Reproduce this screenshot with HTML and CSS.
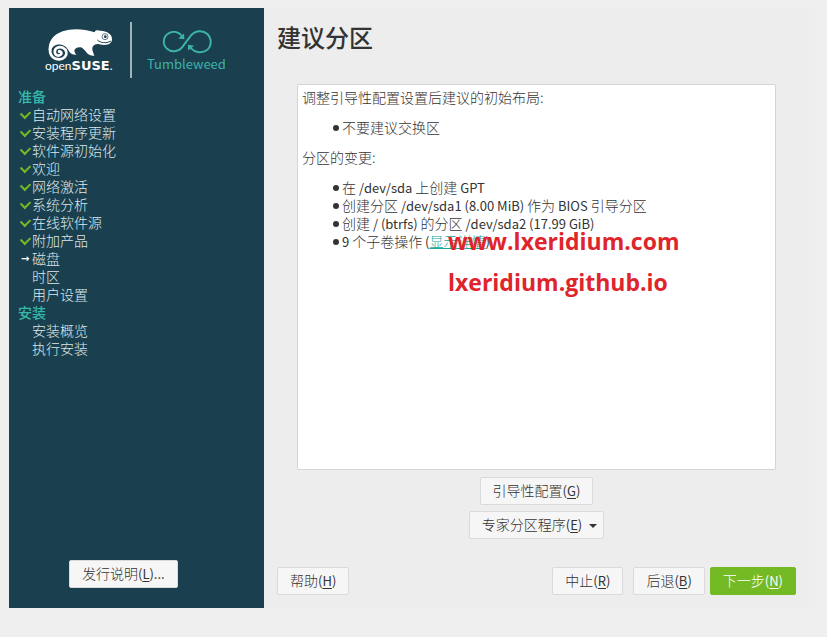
FILE: index.html
```
<!DOCTYPE html>
<html lang="zh-CN">
<head>
    <meta charset="UTF-8">
    <meta name="viewport" content="width=device-width, initial-scale=1.0">
    <title>建议分区</title>
    <link rel="stylesheet" href="styles.css">
</head>
<body>

    <div class="window">
        <aside class="sidebar">
            <div class="logo">
                <div class="brand">
                    <svg class="chameleon" viewBox="135 84 210 99" aria-hidden="true">
                        <path fill="#fff" d="M146 150C145 124 160 104 188 94C215 85 250 86 284 97C285 93 288 90 292 91L312 94C326 97 337 106 336 119C336 123 334 126 331 129C324 136 310 136 298 133C290 131 284 134 279 139C274 147 279 155 283 167C273 168 264 164 259 157C254 151 250 145 243 142C233 140 224 145 223 152C223 156 226 160 229 164C220 165 213 162 208 155C204 147 198 137 184 134C168 131 155 139 154 153Z"/>
                        <path fill="none" stroke="#fff" stroke-width="8" stroke-linecap="round" d="M150 148C149 168 162 178 178 178C193 177 201 167 199 156C196 144 183 138 172 143C162 148 162 162 171 166C179 169 187 162 183 156C181 153 178 153 177 155"/>
                        <circle cx="315" cy="110" r="9" fill="#fff" stroke="#1a3f4f" stroke-width="2"/>
                        <circle cx="316" cy="110" r="4" fill="#1a3f4f"/>
                        <path fill="none" stroke="#1a3f4f" stroke-width="3" d="M292 120C302 129 318 131 333 123"/>
                    </svg>
                    <div class="brand-name">open<b>SUSE</b>.</div>
                </div>
                <div class="product">
                    <svg class="infinity" viewBox="486 86 153 76" aria-hidden="true">
                        <path fill="none" stroke="#3cb3a8" stroke-width="6" d="M545 106C534 94 518 92 505 99C488 108 486 132 499 145C514 158 534 156 546 142L572 107C586 90 608 88 623 101C637 115 636 138 622 150C606 161 586 158 572 144"/>
                        <path fill="#3cb3a8" d="M552 100L553 117L534 115ZM564 151L564 134L583 137Z"/>
                    </svg>
                    <div class="product-name">Tumbleweed</div>
                </div>
            </div>

            <nav class="steps">
                <h2>准备</h2>
                <ul>
                    <li class="done">自动网络设置</li>
                    <li class="done">安装程序更新</li>
                    <li class="done">软件源初始化</li>
                    <li class="done">欢迎</li>
                    <li class="done">网络激活</li>
                    <li class="done">系统分析</li>
                    <li class="done">在线软件源</li>
                    <li class="done">附加产品</li>
                    <li class="current">磁盘</li>
                    <li>时区</li>
                    <li>用户设置</li>
                </ul>
                <h2>安装</h2>
                <ul>
                    <li>安装概览</li>
                    <li>执行安装</li>
                </ul>
            </nav>

            <button class="release-notes" type="button">发行说明<span class="latin">(<u>L</u>)...</span></button>
        </aside>

        <main class="content">
            <h1>建议分区</h1>

            <div class="proposal">
                <p>调整引导性配置设置后建议的初始布局:</p>
                <ul>
                    <li>不要建议交换区</li>
                </ul>
                <p>分区的变更:</p>
                <ul>
                    <li>在<span class="latin"> /dev/sda </span>上创建<span class="latin"> GPT</span></li>
                    <li>创建分区<span class="latin"> /dev/sda1 (8.00 MiB) </span>作为<span class="latin"> BIOS </span>引导分区</li>
                    <li>创建<span class="latin"> / (btrfs) </span>的分区<span class="latin"> /dev/sda2 (17.99 GiB)</span></li>
                    <li><span class="latin">9 </span>个子卷操作<span class="latin"> (</span><a href="#">显示详情</a><span class="latin">)</span></li>
                </ul>
                <div class="watermark">
                    <div>www.lxeridium.com</div>
                    <div>lxeridium.github.io</div>
                </div>
            </div>

            <div class="options">
                <button type="button">引导性配置<span class="latin">(<u>G</u>)</span></button>
                <button class="dropdown" type="button">专家分区程序<span class="latin">(<u>E</u>)</span></button>
            </div>

            <div class="actions">
                <button class="help" type="button">帮助<span class="latin">(<u>H</u>)</span></button>
                <button class="abort" type="button">中止<span class="latin">(<u>R</u>)</span></button>
                <button class="back" type="button">后退<span class="latin">(<u>B</u>)</span></button>
                <button class="next" type="button">下一步<span class="latin">(<u>N</u>)</span></button>
            </div>
        </main>
    </div>

</body>
</html>
```
FILE: styles.css
```
* {
    box-sizing: border-box;
}

body {
    margin: 0;
    padding: 8px 18px 29px 9px;
    height: 100vh;
    background: #efefef;
    color: #333;
    font-family: 'Noto Sans CJK SC', sans-serif;
    font-size: 14px;
    font-weight: 300;
    line-height: 18px;
}

h1, h2, p, ul {
    margin: 0;
    padding: 0;
}

ul {
    list-style: none;
}

.latin {
    font-size: 13px;
    font-weight: 400;
    line-height: 1;
}

.window {
    display: flex;
    height: 100%;
    background: #ededed;
}

/* Sidebar */
.sidebar {
    display: flex;
    flex-direction: column;
    flex: 0 0 255px;
    padding: 14px 0 20px;
    background: #1a3f4f;
    color: #dfe9ec;
}

.logo {
    display: flex;
    height: 56px;
    padding-left: 36px;
}

.brand {
    width: 87px;
    padding-top: 6px;
    border-right: 2px solid #a3b2b9;
    color: #fff;
}

.chameleon {
    display: block;
    width: 70px;
    height: 33px;
}

.brand-name {
    font-family: Lato, sans-serif;
    font-size: 12px;
    font-weight: 400;
    line-height: 10px;
}

.brand-name b {
    font-family: 'DejaVu Sans', sans-serif;
    font-size: 13px;
}

.product {
    padding: 7px 0 0 15px;
    color: #3cb3a8;
}

.infinity {
    display: block;
    width: 51px;
    height: 25px;
    margin-left: 15px;
}

.product-name {
    padding-top: 1px;
    font-size: 13px;
    font-weight: 400;
}

.steps {
    flex: 1;
    padding: 9px 0 0 9px;
}

.steps h2 {
    color: #35b9ab;
    font-size: 14px;
    font-weight: 500;
}

.steps li {
    position: relative;
    padding-left: 14px;
}

.done::before {
    content: "";
    position: absolute;
    left: 3px;
    top: 5px;
    width: 7px;
    height: 5px;
    border: solid #73ba25;
    border-width: 0 0 2px 2px;
    transform: rotate(-45deg);
}

.current::before {
    content: "→";
    position: absolute;
    left: 3px;
    top: 1px;
    color: #fff;
    font-family: 'DejaVu Sans', sans-serif;
    font-size: 10px;
    font-weight: bold;
}

/* Buttons */
button {
    height: 28px;
    padding: 0 12px 2px;
    border: 1px solid #dadada;
    border-radius: 2px;
    background: #f6f6f6;
    color: #333;
    font: inherit;
    white-space: nowrap;
}

u {
    text-underline-offset: 2px;
}

.release-notes {
    align-self: flex-start;
    margin-left: 60px;
}

/* Main area */
.content {
    display: flex;
    flex-direction: column;
    flex: 1;
    min-width: 0;
    padding: 11px 13px 13px;
}

h1 {
    font-size: 24px;
    font-weight: 500;
    line-height: 36px;
}

.proposal {
    position: relative;
    flex: 1;
    margin: 29px 20px 0;
    padding: 3px 4px;
    border: 1px solid #d5d5d5;
    border-radius: 2px;
    background: #fff;
}

.proposal ul {
    margin: 12px 0;
    padding-left: 40px;
}

.proposal li {
    position: relative;
}

.proposal li::before {
    content: "";
    position: absolute;
    left: -9px;
    top: 7px;
    width: 6px;
    height: 6px;
    border-radius: 50%;
    background: #333;
}

.proposal a {
    color: #21a69a;
}

.watermark {
    position: absolute;
    left: 150px;
    top: 136px;
    color: #e0242b;
    font-family: 'Open Sans', sans-serif;
    font-size: 23px;
    font-weight: 700;
    line-height: 41px;
}

.options {
    display: flex;
    flex-direction: column;
    align-items: center;
    gap: 6px;
    margin: 7px 0 28px;
}

.dropdown::after {
    content: "";
    display: inline-block;
    margin-left: 7px;
    border: 4px solid transparent;
    border-top-color: #333;
    border-bottom: 0;
    vertical-align: middle;
}

.dropdown {
    padding-right: 6px;
}

.actions {
    display: flex;
}

.abort {
    margin-left: auto;
}

.back {
    margin: 0 5px 0 10px;
}

.next {
    border-color: #73ba25;
    background: #73ba25;
    color: #fff;
}
```
